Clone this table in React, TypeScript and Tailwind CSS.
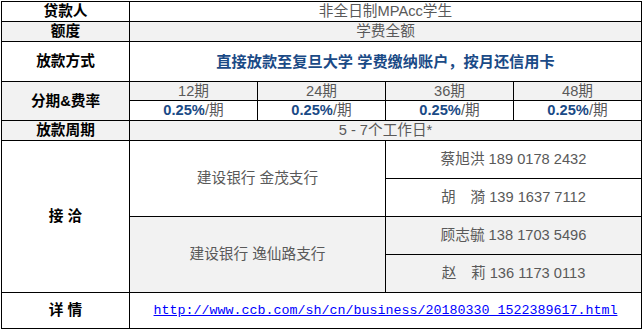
const font = "font-['Liberation_Sans','Noto_Sans_CJK_SC',sans-serif]";

const contacts1 = ['蔡旭洪 189 0178 2432', '胡　漪 139 1637 7112'];
const contacts2 = ['顾志毓 138 1703 5496', '赵　莉 136 1173 0113'];
const terms = ['12期', '24期', '36期', '48期'];

function Label({ text, gray, span = '' }: { text: string; gray?: boolean; span?: string }) {
  return (
    <div
      className={`${span} flex items-center justify-center font-bold text-black text-[14.67px] leading-none ${
        gray ? 'bg-[#f2f2f2]' : 'bg-white'
      }`}
    >
      {text}
    </div>
  );
}

function Cell({ children, gray, span = '' }: { children: React.ReactNode; gray?: boolean; span?: string }) {
  return (
    <div
      className={`${span} flex items-center justify-center text-[#595959] text-[14.67px] leading-none ${
        gray ? 'bg-[#f2f2f2]' : 'bg-white'
      }`}
    >
      {children}
    </div>
  );
}

export default function App() {
  return (
    <div className={`min-h-screen bg-white pt-px pl-px ${font}`}>
      <div className="grid w-[641px] grid-cols-[repeat(5,127px)] grid-rows-[19px_19px_39px_18px_19px_19px_37px_37px_37px_37px_35px] gap-px bg-black p-px">
        {/* 贷款人 */}
        <Label text="贷款人" />
        <Cell span="col-span-4">非全日制MPAcc学生</Cell>

        {/* 额度 */}
        <Label text="额度" gray />
        <Cell span="col-span-4" gray>学费全额</Cell>

        {/* 放款方式 */}
        <Label text="放款方式" />
        <div className="col-span-4 flex items-center justify-center bg-white text-[15.2px] font-bold leading-none text-[#1a4a86]">
          直接放款至复旦大学 学费缴纳账户，按月还信用卡
        </div>

        {/* 分期&费率 */}
        <Label text="分期&费率" gray span="row-span-2" />
        {terms.map((t) => (
          <Cell key={t} gray>{t}</Cell>
        ))}
        {terms.map((t) => (
          <Cell key={t + 'r'}>
            <span className="font-bold text-[#1a4a86]">0.25%</span>
            <span>/期</span>
          </Cell>
        ))}

        {/* 放款周期 */}
        <Label text="放款周期" gray />
        <Cell span="col-span-4" gray>5 - 7个工作日*</Cell>

        {/* 接洽 */}
        <Label text="接 洽" span="row-span-4" />
        <Cell span="col-span-2 row-span-2">建设银行 金茂支行</Cell>
        {contacts1.map((c) => (
          <Cell key={c} span="col-span-2">{c}</Cell>
        ))}
        <Cell span="col-span-2 row-span-2" gray>建设银行 逸仙路支行</Cell>
        {contacts2.map((c) => (
          <Cell key={c} span="col-span-2" gray>{c}</Cell>
        ))}

        {/* 详情 */}
        <Label text="详 情" />
        <div className="col-span-4 flex items-center justify-center bg-white">
          <a
            href="#"
            className="font-['Liberation_Mono',monospace] text-[13.33px] leading-none text-[#0000ff] underline"
          >
            http://www.ccb.com/sh/cn/business/20180330_1522389617.html
          </a>
        </div>
      </div>
    </div>
  );
}
